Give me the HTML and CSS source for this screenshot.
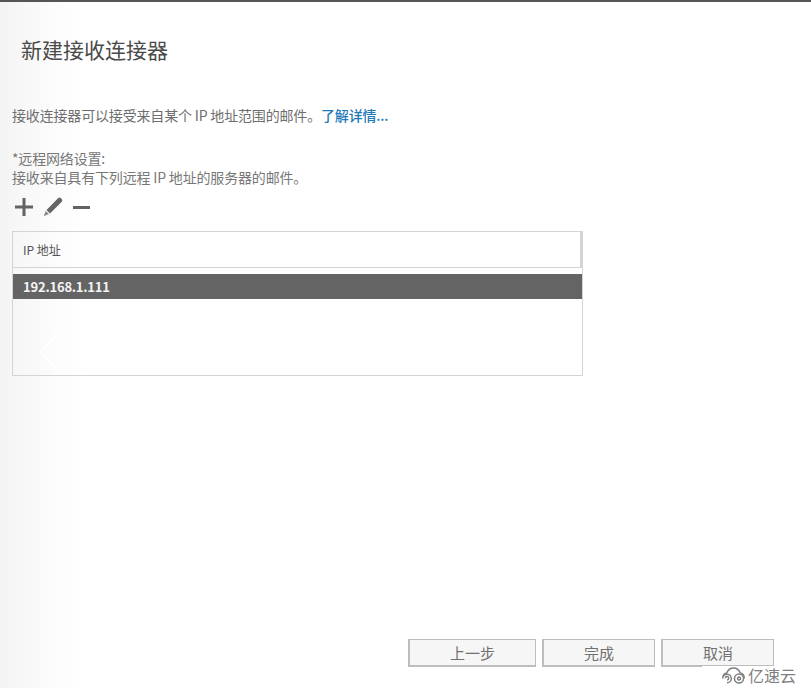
FILE: index.html
```html
<!DOCTYPE html>
<html lang="zh">
<head>
<meta charset="utf-8">
<title>新建接收连接器</title>
<link rel="stylesheet" href="styles.css">
</head>
<body>
<div class="page">
  <h1 class="title">新建接收连接器</h1>
  <p class="intro">接收连接器可以接受来自某个 IP 地址范围的邮件。<a class="link" href="#">了解详情...</a></p>
  <div class="field">
    <div>*远程网络设置:</div>
    <div>接收来自具有下列远程 IP 地址的服务器的邮件。</div>
  </div>
  <div class="toolbar">
    <svg class="icon plus" width="18" height="18" viewBox="0 0 18 18"><path d="M7.500 0h3v7.500H18v3h-7.500V18h-3v-7.500H0v-3h7.500z" fill="#636363"/></svg>
    <svg class="icon pencil" width="20" height="20" viewBox="0 0 20 20"><path d="M14.800 1.400c1-1 2.300-1 3.100-.2l.8.800c.8.800.8 2.200-.2 3.100L7 16.500 3.500 13z" fill="#666"/><path d="M2.800 14l3.100 3.100-2.900 1.200-2.300.9.900-2.300z" fill="#888"/></svg>
    <svg class="icon minus" width="17" height="3" viewBox="0 0 17 3"><rect width="17" height="3" fill="#636363"/></svg>
  </div>
  <div class="table">
    <div class="thead">IP 地址</div>
    <div class="row">192.168.1.111</div>
    <svg class="chevron" width="20" height="38" viewBox="0 0 20 38"><path d="M18 1 2 19l16 18" fill="none" stroke="#fff" stroke-width="1.500"/></svg>
  </div>
  <div class="actions">
    <button class="btn btn-back">上一步</button>
    <button class="btn btn-finish">完成</button>
    <button class="btn btn-cancel">取消</button>
  </div>
  <div class="watermark">
    <svg width="25" height="17" viewBox="0 0 25 17"><g fill="none" stroke="#808080" stroke-width="1.500"><path d="M6 15.800a4.300 4.300 0 1 0-4.300-4.300c0-3 1.700-5 4-5.500C7 3 9.500 1 12.500 1S18 3 19.300 6c2.300.5 4 2.500 4 5.500"/><path d="M6 13a1.700 1.700 0 1 0-1.700-1.700"/><circle cx="18" cy="11.500" r="4.500"/><circle cx="18" cy="11.500" r="1.500"/></g></svg>
    <span>亿速云</span>
  </div>
</div>
</body>
</html>
```
FILE: styles.css
```css
* { box-sizing: border-box; }
html, body { margin: 0; height: 100%; }
body {
  font-family: "Noto Sans CJK SC", "Liberation Sans", sans-serif;
  color: #666;
  overflow: hidden;
}
.page {
  position: relative;
  height: 688px;
  display: flex;
  flex-direction: column;
  padding-left: 12px;
  border-top: 2px solid #555;
  background: linear-gradient(90deg, #f4f4f4 0, #fcfcfc 55px, #fff 85px);
}
.title {
  margin: 33px 0 0 9px;
  font-size: 21px;
  line-height: 28px;
  font-weight: 400;
  color: #4a4a4a;
}
.intro {
  margin: 43px 0 0;
  font-size: 14px;
  line-height: 18px;
  letter-spacing: -0.17px;
  color: #6e6e6e;
}
.link { color: #1f7ab8; text-decoration: none; font-weight: 500; }
.field {
  margin-top: 25px;
  font-size: 14px;
  line-height: 19px;
  letter-spacing: -0.17px;
  color: #777;
}
.toolbar {
  display: flex;
  align-items: center;
  height: 22px;
  margin: 9px 0 0 3px;
}
.pencil { margin-left: 10px; }
.minus { margin-left: 10px; }
.table {
  position: relative;
  width: 571px;
  height: 145px;
  margin-top: 13px;
  border: 1px solid #d4d4d4;
}
.thead {
  height: 36px;
  padding-left: 10px;
  font-size: 12px;
  line-height: 35px;
  color: #555;
  border-bottom: 1px solid #d4d4d4;
  border-right: 2px solid #d4d4d4;
}
.row {
  height: 25px;
  margin-top: 6px;
  padding-left: 10px;
  font-size: 13px;
  line-height: 25px;
  font-weight: 700;
  letter-spacing: -0.2px;
  color: #f4f4f4;
  background: #646464;
}
.chevron {
  position: absolute;
  left: 26px;
  top: 101px;
}
.actions {
  display: flex;
  gap: 6px;
  margin: auto 0 21px 396px;
}
.btn {
  height: 28px;
  padding: 0;
  font: 400 15px/22px "Noto Sans CJK SC", "Liberation Sans", sans-serif;
  color: #707070;
  background: #f6f6f6;
  border: 2px solid #bdbdbd;
  border-width: 1px 1px 2px 2px;
}
.btn-back { width: 128px; }
.btn-finish { width: 113px; }
.btn-cancel { width: 113px; }
.watermark {
  position: absolute;
  left: 702px;
  bottom: 0;
  width: 100px;
  height: 22px;
  display: flex;
  align-items: center;
  gap: 2px;
  padding: 0 0 4px 19px;
  background: #fff;
  font-size: 16px;
  color: #808080;
  white-space: nowrap;
}
```
